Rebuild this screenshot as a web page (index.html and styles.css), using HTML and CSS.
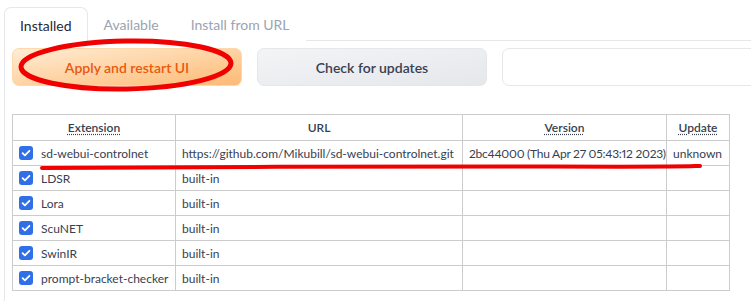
FILE: index.html
```html
<!DOCTYPE html>
<html lang="en">
<head>
    <meta charset="UTF-8">
    <title>Extensions</title>
    <link rel="stylesheet" href="styles.css">
</head>
<body>
    <div class="tabs">
        <button class="tab selected">Installed</button>
        <button class="tab">Available</button>
        <button class="tab">Install from URL</button>
        <div class="tabline"></div>
    </div>
    <div class="panel">
        <div class="actions">
            <button class="btn primary">Apply and restart UI</button>
            <button class="btn secondary">Check for updates</button>
            <input class="textbox" type="text">
        </div>
        <table class="extensions">
            <colgroup>
                <col style="width:163px">
                <col style="width:287px">
                <col style="width:204px">
                <col style="width:63px">
            </colgroup>
            <thead>
                <tr>
                    <th><abbr title="Use checkbox to enable the extension">Extension</abbr></th>
                    <th>URL</th>
                    <th><abbr title="Extension version">Version</abbr></th>
                    <th><abbr title="Use checkbox to mark the extension for update">Update</abbr></th>
                </tr>
            </thead>
            <tbody>
                <tr>
                    <td><label class="ext"><span class="check"><svg viewBox="0 0 14 14"><path d="M3.6 7.2l2.3 2.2 4.5-4.6"/></svg></span>sd-webui-controlnet</label></td>
                    <td>https://github.com/Mikubill/sd-webui-controlnet.git</td>
                    <td class="version">2bc44000 (Thu Apr 27 05:43:12 2023)</td>
                    <td>unknown</td>
                </tr>
                <tr>
                    <td><label class="ext"><span class="check"><svg viewBox="0 0 14 14"><path d="M3.6 7.2l2.3 2.2 4.5-4.6"/></svg></span>LDSR</label></td>
                    <td>built-in</td>
                    <td></td>
                    <td></td>
                </tr>
                <tr>
                    <td><label class="ext"><span class="check"><svg viewBox="0 0 14 14"><path d="M3.6 7.2l2.3 2.2 4.5-4.6"/></svg></span>Lora</label></td>
                    <td>built-in</td>
                    <td></td>
                    <td></td>
                </tr>
                <tr>
                    <td><label class="ext"><span class="check"><svg viewBox="0 0 14 14"><path d="M3.6 7.2l2.3 2.2 4.5-4.6"/></svg></span>ScuNET</label></td>
                    <td>built-in</td>
                    <td></td>
                    <td></td>
                </tr>
                <tr>
                    <td><label class="ext"><span class="check"><svg viewBox="0 0 14 14"><path d="M3.6 7.2l2.3 2.2 4.5-4.6"/></svg></span>SwinIR</label></td>
                    <td>built-in</td>
                    <td></td>
                    <td></td>
                </tr>
                <tr>
                    <td><label class="ext"><span class="check"><svg viewBox="0 0 14 14"><path d="M3.6 7.2l2.3 2.2 4.5-4.6"/></svg></span>prompt-bracket-checker</label></td>
                    <td>built-in</td>
                    <td></td>
                    <td></td>
                </tr>
            </tbody>
        </table>
    </div>
    <!-- red marker annotations drawn over the screenshot -->
    <svg class="marks" width="751" height="301" viewBox="0 0 751 301">
        <ellipse cx="126" cy="65" rx="105" ry="24" transform="rotate(-1 126 65)"/>
        <path d="M42 168 C200 167 400 166 550 166.5 S690 166 700 166"/>
    </svg>
</body>
</html>
```

FILE: styles.css
```css
html, body{
    margin: 0;
    padding: 0;
    background: #ffffff;
    overflow: hidden;
}
body{
    width: 751px;
    height: 301px;
    position: relative;
    font-family: 'Lato', 'Liberation Sans', sans-serif;
    font-size: 14px;
    color: #374151;
}
.tabs{
    display: flex;
    align-items: flex-end;
    padding: 7px 0 0 4px;
}
.tab{
    font-family: inherit;
    font-size: 14px;
    background: none;
    border: 1px solid transparent;
    border-bottom: none;
    border-radius: 7px 7px 0 0;
    height: 34px;
    padding: 0 15px;
    color: #9ca3af;
}
.tab.selected{
    border-color: #e5e7eb;
    color: #1f2937;
    background: #ffffff;
    margin-bottom: -1px;
    height: 35px;
    padding-top: 1px;
}
.tabline{
    flex: 1;
    border-bottom: 1px solid #e5e7eb;
}
.panel{
    margin-left: 4px;
    border-left: 1px solid #e5e7eb;
    padding: 7px 0 0 7px;
    height: 253px;
    overflow: hidden;
}
.actions{
    display: flex;
    gap: 15px;
}
.btn{
    flex: none;
    width: 230px;
    height: 38px;
    border-radius: 7px;
    font-family: inherit;
    font-size: 14px;
    font-weight: 600;
}
.primary{
    background: linear-gradient(to bottom right, #ffedd5, #fdba74);
    border: 1px solid #fed7aa;
    color: #ea580c;
}
.secondary{
    background: linear-gradient(to bottom right, #f3f4f6, #e5e7eb);
    border: 1px solid #e5e7eb;
    color: #374151;
}
.textbox{
    flex: none;
    width: 300px;
    height: 38px;
    box-sizing: border-box;
    border: 1px solid #e5e7eb;
    border-radius: 7px;
}
.extensions{
    margin-top: 28px;
    border-collapse: collapse;
    table-layout: fixed;
    width: 718px;
    font-size: 12px;
    font-variant-numeric: proportional-nums;
}
.extensions th, .extensions td{
    border: 1px solid #cccccc;
    padding: 0 6px;
    white-space: nowrap;
    overflow: hidden;
}
.extensions th{
    height: 25px;
    font-weight: 600;
    text-align: center;
}
.extensions td{
    height: 24px;
}
.extensions .version{
    letter-spacing: -0.25px;
}
abbr{
    text-decoration: underline dotted;
    text-underline-offset: 2px;
}
.ext{
    display: flex;
    align-items: center;
    gap: 8px;
}
.check{
    flex: none;
    width: 14px;
    height: 14px;
    border-radius: 3px;
    background: #2f6fe8;
    display: flex;
}
.check svg{
    width: 14px;
    height: 14px;
    fill: none;
    stroke: #ffffff;
    stroke-width: 1.8;
    stroke-linecap: round;
    stroke-linejoin: round;
}
.marks{
    position: absolute;
    left: 0;
    top: 0;
    pointer-events: none;
    fill: none;
    stroke: #f00000;
}
.marks ellipse{
    stroke-width: 5;
}
.marks path{
    stroke-width: 4;
    stroke-linecap: round;
}
```
